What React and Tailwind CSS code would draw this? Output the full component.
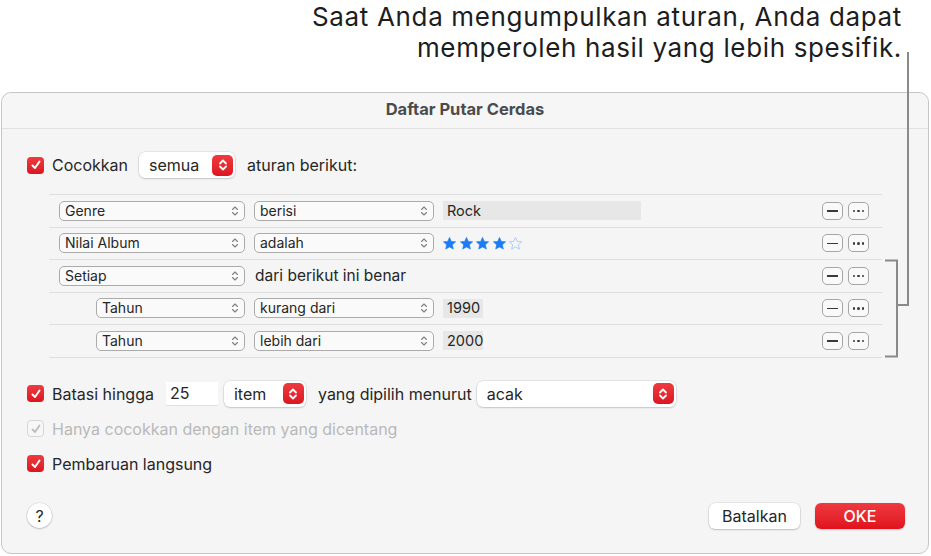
import React from "react";

const font = { fontFamily: "Inter, 'Noto Sans', sans-serif" };

const SmallChevron = () => (
  <svg width="8" height="12" viewBox="0 0 8 12" className="shrink-0">
    <path d="M1.5 4.5 L4 2 L6.5 4.5 M1.5 7.5 L4 10 L6.5 7.5" fill="none" stroke="#808080" strokeWidth="1.1" strokeLinecap="round" strokeLinejoin="round" />
  </svg>
);

const RedStepper = () => (
  <div className="w-[21px] h-[21px] rounded-[5px] bg-gradient-to-b from-[#ef3a40] to-[#dc1420] flex items-center justify-center shrink-0">
    <svg width="10" height="14" viewBox="0 0 10 14">
      <path d="M2 5.5 L5 2.5 L8 5.5 M2 8.5 L5 11.5 L8 8.5" fill="none" stroke="#fff" strokeWidth="1.8" strokeLinecap="round" strokeLinejoin="round" />
    </svg>
  </div>
);

const Check = ({ disabled }) =>
  disabled ? (
    <div className="w-[17px] h-[17px] rounded-[4px] border border-[#d6d6d6] bg-[#f7f7f7] flex items-center justify-center shrink-0">
      <svg width="12" height="12" viewBox="0 0 12 12">
        <path d="M2.5 6.5 L5 9 L9.5 2.5" fill="none" stroke="#bdbdbd" strokeWidth="1.8" strokeLinecap="round" strokeLinejoin="round" />
      </svg>
    </div>
  ) : (
    <div className="w-[17px] h-[17px] rounded-[4px] bg-gradient-to-b from-[#ee3a40] to-[#db1420] flex items-center justify-center shrink-0">
      <svg width="12" height="12" viewBox="0 0 12 12">
        <path d="M2.5 6.5 L5 9 L9.5 2.5" fill="none" stroke="#fff" strokeWidth="2" strokeLinecap="round" strokeLinejoin="round" />
      </svg>
    </div>
  );

const Popup = ({ label, w }) => (
  <div className={`${w} h-[20px] rounded-[5px] border border-[#ababab] bg-[#fafafa] flex items-center justify-between pl-[5px] pr-[5px] shrink-0`}>
    <span className="text-[14px] text-[#262626] leading-none">{label}</span>
    <SmallChevron />
  </div>
);

const Field = ({ value, w }) => (
  <div className={`${w} h-[19px] bg-[#e7e7e7] flex items-center pl-[4px] text-[14.5px] text-[#262626]`}>{value}</div>
);

const Star = ({ filled }) => (
  <svg width="15" height="15" viewBox="0 0 24 24" className="shrink-0">
    <path
      d="M12 2.2 L14.9 8.6 L21.8 9.3 L16.6 14 L18.1 20.9 L12 17.4 L5.9 20.9 L7.4 14 L2.2 9.3 L9.1 8.6 Z"
      fill={filled ? "#1a7cf6" : "none"}
      stroke={filled ? "#1a7cf6" : "#9cc3f7"}
      strokeWidth={filled ? "1" : "1.3"}
      strokeLinejoin="round"
    />
  </svg>
);

const RowButtons = () => (
  <div className="flex items-center gap-[5px] ml-auto">
    <div className="w-[21px] h-[18px] rounded-[5px] border border-[#a6a6a6] bg-[#f9f9f9] flex items-center justify-center">
      <div className="w-[11px] h-[1.5px] bg-[#3a3a3a]" />
    </div>
    <div className="w-[21px] h-[18px] rounded-[5px] border border-[#a6a6a6] bg-[#f9f9f9] flex items-center justify-center gap-[2px]">
      <div className="w-[2.5px] h-[2.5px] rounded-full bg-[#3a3a3a]" />
      <div className="w-[2.5px] h-[2.5px] rounded-full bg-[#3a3a3a]" />
      <div className="w-[2.5px] h-[2.5px] rounded-full bg-[#3a3a3a]" />
    </div>
  </div>
);

const RuleRow = ({ children, indent }) => (
  <div className={`h-[32.5px] border-b border-[#dedede] flex items-center ${indent ? "pl-[47px]" : "pl-[10px]"} pr-[13px]`}>
    {children}
    <RowButtons />
  </div>
);

const shadow = "shadow-[0_0_0_0.5px_rgba(0,0,0,0.12),0_1px_2px_rgba(0,0,0,0.15)]";

export default function App() {
  return (
    <div className="relative w-[931px] h-[556px] bg-white overflow-hidden" style={font}>
      {/* callout */}
      <div className="h-[92px] pr-[29px] pt-[1px] text-right text-[26px] leading-[31px] text-[#1d1d1d] tracking-[0.65px]">
        <p>Saat Anda mengumpulkan aturan, Anda dapat</p>
        <p>memperoleh hasil yang lebih spesifik.</p>
      </div>

      {/* window */}
      <div className="ml-[1px] w-[928px] h-[462px] rounded-[10px] border border-[#c6c6c6] bg-[#f5f5f5] flex flex-col">
        <div className="h-[36px] pb-[3px] border-b border-[#e1e1e1] flex items-center justify-center rounded-t-[10px] bg-[#f6f6f6]">
          <span className="text-[16.5px] font-bold text-[#4b4b4b]">Daftar Putar Cerdas</span>
        </div>

        <div className="pl-[25px] pt-[23px] flex items-center h-[49px] text-[16px] text-[#262626]">
          <Check />
          <span className="ml-[8px]">Cocokkan</span>
          <div className={`ml-[11px] w-[96px] h-[26px] rounded-[6px] bg-white ${shadow} flex items-center justify-between pl-[10px] pr-[2px]`}>
            <span>semua</span>
            <RedStepper />
          </div>
          <span className="ml-[12px]">aturan berikut:</span>
        </div>

        <div className="ml-[47px] mr-[46px] mt-[16px] border-t border-[#dedede]">
          <RuleRow>
            <Popup label="Genre" w="w-[186px]" />
            <div className="ml-[9px]"><Popup label="berisi" w="w-[180px]" /></div>
            <div className="ml-[9px]"><Field value="Rock" w="w-[198px]" /></div>
          </RuleRow>
          <RuleRow>
            <Popup label="Nilai Album" w="w-[186px]" />
            <div className="ml-[9px]"><Popup label="adalah" w="w-[180px]" /></div>
            <div className="ml-[8px] flex items-center gap-[1.5px]">
              <Star filled /><Star filled /><Star filled /><Star filled /><Star />
            </div>
          </RuleRow>
          <RuleRow>
            <Popup label="Setiap" w="w-[186px]" />
            <span className="ml-[10px] text-[15.5px] text-[#262626]">dari berikut ini benar</span>
          </RuleRow>
          <RuleRow indent>
            <Popup label="Tahun" w="w-[149px]" />
            <div className="ml-[9px]"><Popup label="kurang dari" w="w-[180px]" /></div>
            <div className="ml-[9px]"><Field value="1990" w="w-[40px]" /></div>
          </RuleRow>
          <RuleRow indent>
            <Popup label="Tahun" w="w-[149px]" />
            <div className="ml-[9px]"><Popup label="lebih dari" w="w-[180px]" /></div>
            <div className="ml-[9px]"><Field value="2000" w="w-[40px]" /></div>
          </RuleRow>
        </div>

        <div className="pl-[25px] mt-[23px] flex items-center h-[26px] text-[16px] text-[#262626]">
          <Check />
          <span className="ml-[8px]">Batasi hingga</span>
          <div className="ml-[12px] w-[52px] h-[24px] bg-white border-b border-[#e0e0e0] flex items-center pl-[4px]">25</div>
          <div className={`ml-[6px] w-[82px] h-[26px] rounded-[6px] bg-white ${shadow} flex items-center justify-between pl-[10px] pr-[2px]`}>
            <span>item</span>
            <RedStepper />
          </div>
          <span className="ml-[12px]">yang dipilih menurut</span>
          <div className={`ml-[5px] w-[199px] h-[26px] rounded-[6px] bg-white ${shadow} flex items-center justify-between pl-[10px] pr-[2px]`}>
            <span>acak</span>
            <RedStepper />
          </div>
        </div>

        <div className="pl-[25px] mt-[9px] flex items-center h-[26px] text-[16px] text-[#b9b9b9]">
          <Check disabled />
          <span className="ml-[8px]">Hanya cocokkan dengan item yang dicentang</span>
        </div>

        <div className="pl-[25px] mt-[9px] flex items-center h-[26px] text-[16px] text-[#262626]">
          <Check />
          <span className="ml-[8px]">Pembaruan langsung</span>
        </div>

        <div className="mt-[26px] pl-[25px] pr-[23px] flex items-center h-[26px]">
          <div className="w-[25px] h-[25px] rounded-full bg-white shadow-[0_0_0_0.5px_rgba(0,0,0,0.12),0_1px_2px_rgba(0,0,0,0.18)] flex items-center justify-center text-[16px] text-[#262626]">?</div>
          <div className="ml-auto w-[91px] h-[26px] rounded-[6px] bg-white shadow-[0_0_0_0.5px_rgba(0,0,0,0.12),0_1px_2px_rgba(0,0,0,0.18)] flex items-center justify-center text-[16px] text-[#262626]">Batalkan</div>
          <div className="ml-[15px] w-[90px] h-[26px] rounded-[6px] bg-gradient-to-b from-[#ef3840] to-[#e0101b] shadow-[0_1px_2px_rgba(0,0,0,0.18)] flex items-center justify-center text-[16px] font-medium text-white">OKE</div>
        </div>
      </div>

      {/* callout connector lines */}
      <svg className="absolute left-0 top-0 pointer-events-none" width="931" height="556">
        <path d="M908 52 L908 305 L897 305" fill="none" stroke="#8a8a8a" strokeWidth="2" />
        <path d="M885 260.5 L897 260.5 L897 356.5 L885 356.5" fill="none" stroke="#8a8a8a" strokeWidth="2" />
      </svg>
    </div>
  );
}
